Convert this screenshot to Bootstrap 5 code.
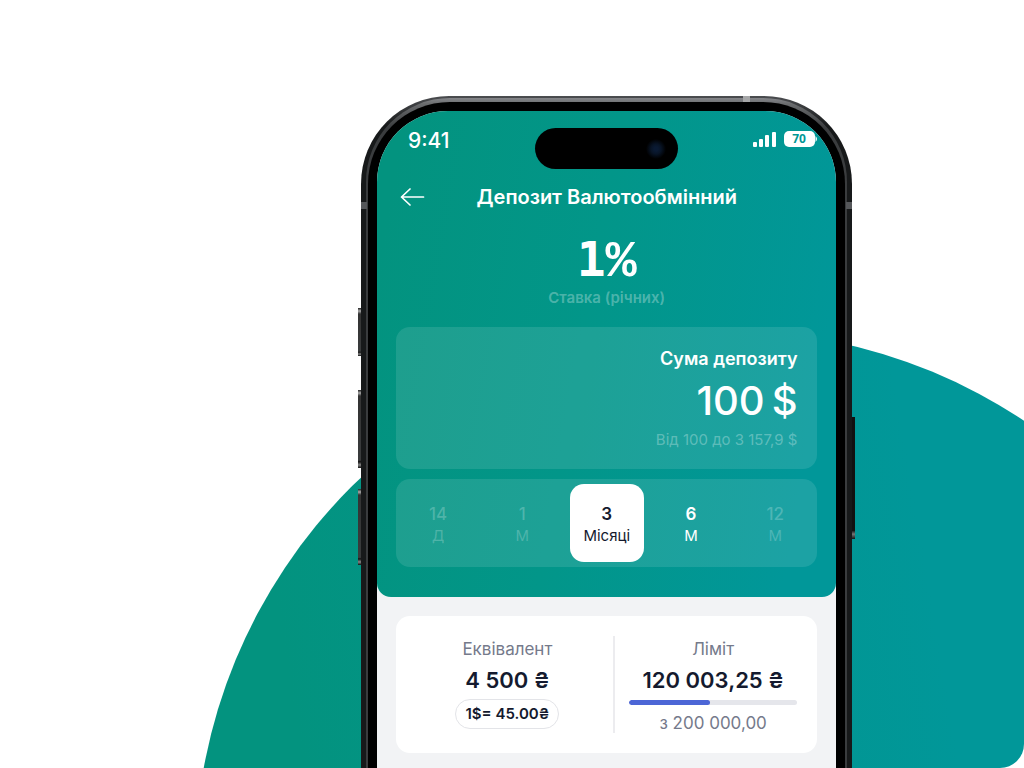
<!DOCTYPE html>
<html lang="uk">
<head>
<meta charset="utf-8">
<meta name="viewport" content="width=device-width, initial-scale=1">
<title>Депозит Валютообмінний</title>
<link rel="stylesheet" href="https://cdn.jsdelivr.net/npm/bootstrap@5.3.0/dist/css/bootstrap.min.css">
<style>
  :root { --ink: #141a2e; --muted: #757a8b; --page: #f2f3f5; }
  body { font-family: Inter, "Noto Sans", sans-serif; background: #fff; color: var(--ink); }
  .stage { min-height: 100vh; padding-top: 96px; border-radius: 0 0 24px 0; isolation: isolate; }
  .backdrop { position: absolute; inset: 0; z-index: -1; }

  /* handset body: dark outer ring, lighter inner ring, black bezel */
  .phone { width: 48%; min-width: 460px; margin-left: 35.25%; padding: 2px 5px 0;
    background: linear-gradient(#4b4d50, #17191a 30px); border-radius: 88px 88px 0 0; }
  .rim { padding: 4px 2px 0; background: linear-gradient(#85868a, #6a6c6e 6px, #3a3c3e 30px); border-radius: 84px 84px 0 0; }
  .bezel { padding: 9px 9px 0; background: #000; border-radius: 82px 82px 0 0; }
  .screen { background: var(--page); border-radius: 71px 71px 0 0; }
  .side-key { position: absolute; width: 3px; left: -3px; background: linear-gradient(#222, #aaa 3px, #333 6px, #3a3c3d 90%, #111 92%, #888 96%, #111); }
  .key-action { top: 212px; height: 48px; }
  .key-up { top: 294px; height: 78px; }
  .key-down { top: 393px; height: 76px; }
  .key-power { top: 321px; height: 122px; left: auto; right: -3px; background: linear-gradient(#111 93%, #777 96%, #111); }
  .band { position: absolute; background: #55575a; }
  .band-top { top: 0; right: 102px; width: 7px; height: 6px; background: #a6a7a8; }
  .band-left { left: 0; top: 106px; width: 6px; height: 7px; }
  .band-right { right: 0; top: 106px; width: 6px; height: 7px; }

  /* green header */
  .hero { background: linear-gradient(100deg, #03937f 5%, #029689 45%, #019799 90%); border-radius: 0 0 14px 14px; padding: 0 19px 30px; color: #fff; }
  .status { height: 69px; padding: 17px 0 0 12px; }
  .clock { font-size: 21px; line-height: 26px; font-weight: 500; }
  .island { position: absolute; top: 17px; left: 50%; width: 143px; height: 41px; margin-left: -72px; border-radius: 21px;
    background: radial-gradient(circle at 121px 21px, #0a1a33 0 2px, #081426 5px, #000 10px); }
  .signals { margin-top: 2px; }
  .battery-text { font: 700 12px "Noto Sans", sans-serif; }
  .back-btn { color: #fff; width: 32px; height: 32px; }
  .screen-title { font-size: 20px; line-height: 34px; font-weight: 600; padding-right: 32px; }
  .rate-block { padding-top: 18px; }
  .rate { font: bold 48px/54px "DejaVu Sans Mono", monospace; height: 56px; }
  .rate-sign { font-family: "Liberation Mono", monospace; font-size: 52px; line-height: 1; }
  .rate-note { font-size: 15px; line-height: 20px; font-weight: 600; color: rgba(255,255,255,.3); }
  .glass { background: rgba(255,255,255,.11); border-radius: 14px; }
  .amount-box { padding: 22px 20px 19px; margin-top: 19px; }
  .amount-label { font-size: 18px; line-height: 20px; font-weight: 600; }
  .amount { font-size: 40px; line-height: 48px; font-weight: 500; padding: 8px 0 5px; gap: 7px; }
  .amount-range { font-size: 15px; line-height: 20px; color: rgba(255,255,255,.3); }
  .terms { padding: 5px 0; margin-top: 10px; display: grid; grid-template-columns: repeat(5, 1fr); }
  .term { border: 0; background: none; color: #fff; height: 78px; border-radius: 14px; margin: 0 5px; padding: 4px 0 0; }
  .term b { display: block; font-size: 17px; line-height: 22px; font-weight: 600; }
  .term span { display: block; font-size: 15px; line-height: 22px; }
  .term:disabled { color: rgba(255,255,255,.22); }
  .term:disabled b { font-weight: 500; }
  .term.chosen { background: #fff; color: var(--ink); }

  /* totals */
  .totals { margin: 19px 19px 0; background: #fff; border-radius: 14px; padding: 20px 20px 20px 0; }
  .total-cell { flex: 1 1 0; padding: 3px 0 0 14px; }
  .total-main { flex: 0 0 54%; padding-left: 6px; }
  .total-cell + .total-cell { border-left: 2px solid #ececef; }
  .caption { font-size: 17px; line-height: 20px; color: var(--muted); }
  .sum { font-size: 22px; line-height: 28px; font-weight: 600; margin-top: 7px; }
  .fx { font-size: 15px; line-height: 20px; font-weight: 600; border: 1px solid #e3e4e8; border-radius: 15px; padding: 4px 9px; margin-top: 5px; }
  .limit-bar { height: 5px; margin-top: 6px; background: #e5e6eb; border-radius: 3px; }
  .limit-bar .progress-bar { background: #4c66d6; border-radius: 3px; }
</style>
</head>
<body>
<main class="stage position-relative overflow-hidden d-flex flex-column">
  <svg class="backdrop w-100 h-100" viewBox="0 0 1024 768" preserveAspectRatio="xMidYMin slice" aria-hidden="true">
    <defs><linearGradient id="sea" x1="0.1" y1="0.4" x2="0.7" y2="0.3"><stop offset="0" stop-color="#03937f"/><stop offset="1" stop-color="#019799"/></linearGradient></defs>
    <circle cx="728" cy="864" r="533" fill="url(#sea)"/>
  </svg>

  <div class="phone position-relative flex-grow-1 d-flex flex-column">
    <i class="side-key key-action"></i><i class="side-key key-up"></i><i class="side-key key-down"></i><i class="side-key key-power"></i>
    <div class="rim flex-grow-1 d-flex flex-column">
    <div class="bezel flex-grow-1 d-flex flex-column">
      <div class="screen position-relative overflow-hidden flex-grow-1">
        <section class="hero">
          <div class="status d-flex justify-content-between align-items-start">
            <span class="clock">9:41</span>
            <span class="island"></span>
            <svg class="signals flex-shrink-0" width="66" height="22" viewBox="0 0 66 22" role="img" aria-label="Батарея 70">
              <g fill="#fff"><rect x="2" y="12" width="4" height="5" rx="1"/><rect x="8" y="9" width="4" height="8" rx="1"/><rect x="14" y="5" width="4" height="12" rx="1"/><rect x="21" y="2" width="4" height="15" rx="1"/>
              <rect x="33" y="1" width="31" height="16" rx="5"/><path d="M64.500 6q3 3 0 6z"/></g>
              <text class="battery-text" x="48" y="13" text-anchor="middle" fill="#019795">70</text>
            </svg>
          </div>
          <div class="d-flex align-items-center">
            <button class="back-btn btn p-0 border-0 d-flex align-items-center" type="button" aria-label="Назад">
              <svg width="32" height="32" viewBox="0 0 32 32" fill="none" stroke="#fff" stroke-width="1.700" stroke-linecap="round" stroke-linejoin="round"><path d="M27.500 16H5.500M14 8l-8.500 8 8.500 8"/></svg>
            </button>
            <h1 class="screen-title flex-grow-1 text-center mb-0">Депозит Валютообмінний</h1>
          </div>
          <div class="rate-block text-center">
            <div class="rate">1<span class="rate-sign">%</span></div>
            <div class="rate-note">Ставка (річних)</div>
          </div>
          <div class="glass amount-box text-end">
            <div class="amount-label">Сума депозиту</div>
            <div class="amount d-flex justify-content-end"><span>100</span> <span>$</span></div>
            <div class="amount-range">Від 100 до 3 157,9 $</div>
          </div>
          <div class="glass terms" role="group" aria-label="Строк депозиту">
            <button class="term" type="button" disabled><b>14</b><span>Д</span></button>
            <button class="term" type="button" disabled><b>1</b><span>М</span></button>
            <button class="term chosen" type="button" aria-pressed="true"><b>3</b><span>Місяці</span></button>
            <button class="term" type="button"><b>6</b><span>М</span></button>
            <button class="term" type="button" disabled><b>12</b><span>М</span></button>
          </div>
        </section>
        <section class="totals d-flex text-center">
          <div class="total-cell total-main">
            <div class="caption">Еквівалент</div>
            <div class="sum">4 500 ₴</div>
            <div class="fx d-inline-block">1$= 45.00₴</div>
          </div>
          <div class="total-cell">
            <div class="caption">Ліміт</div>
            <div class="sum">120 003,25 ₴</div>
            <div class="progress limit-bar" role="progressbar" aria-label="Ліміт" aria-valuenow="48" aria-valuemin="0" aria-valuemax="100"><div class="progress-bar" style="width:48%"></div></div>
            <div class="caption mt-2">з 200 000,00</div>
          </div>
        </section>
      </div>
    </div>
    </div>
    <i class="band band-top"></i><i class="band band-left"></i><i class="band band-right"></i>
  </div>
</main>
<script src="https://cdn.jsdelivr.net/npm/bootstrap@5.3.0/dist/js/bootstrap.bundle.min.js"></script>
</body>
</html>
